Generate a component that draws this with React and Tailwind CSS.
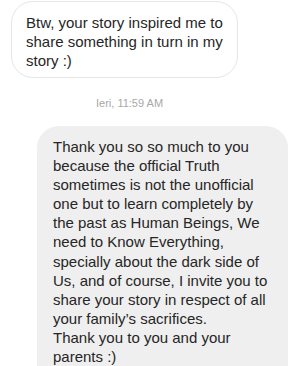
import React from 'react';

const firstLines = ['Btw, your story inspired me to', 'share something in turn in my', 'story :)'];

const replyLines = [
  'Thank you so so much to you',
  'because the official Truth',
  'sometimes is not the unofficial',
  'one but to learn completely by',
  'the past as Human Beings, We',
  'need to Know Everything,',
  'specially about the dark side of',
  'Us, and of course, I invite you to',
  'share your story in respect of all',
  "your family\u2019s sacrifices.",
  'Thank you to you and your',
  'parents :)',
];

export default function App() {
  return (
    <div className="w-[298px] h-[366px] overflow-hidden bg-white font-['Liberation_Sans',Arial,sans-serif] text-[#262626]">
      <div className="pt-px pl-[11px]">
        <div className="w-[227px] rounded-[22px] border border-[#e6e6e6] bg-white pl-[14px] pr-2 pt-[11px] pb-[7px] text-[15px] leading-[19px]">
          {firstLines.map((l) => (
            <span key={l} className="block whitespace-nowrap">{l}</span>
          ))}
        </div>
      </div>
      <div className="pl-[96px] pt-[19px] text-[11px] leading-[12px] text-[#a8a8a8]">Ieri, 11:59 AM</div>
      <div className="pl-[37px] pt-[17px]">
        <div className="w-[251px] rounded-t-[22px] bg-[#efefef] pl-[16px] pr-2 pt-[11px] pb-4 text-[15px] leading-[19.1px]">
          {replyLines.map((l) => (
            <span key={l} className="block whitespace-nowrap">{l}</span>
          ))}
        </div>
      </div>
    </div>
  );
}
